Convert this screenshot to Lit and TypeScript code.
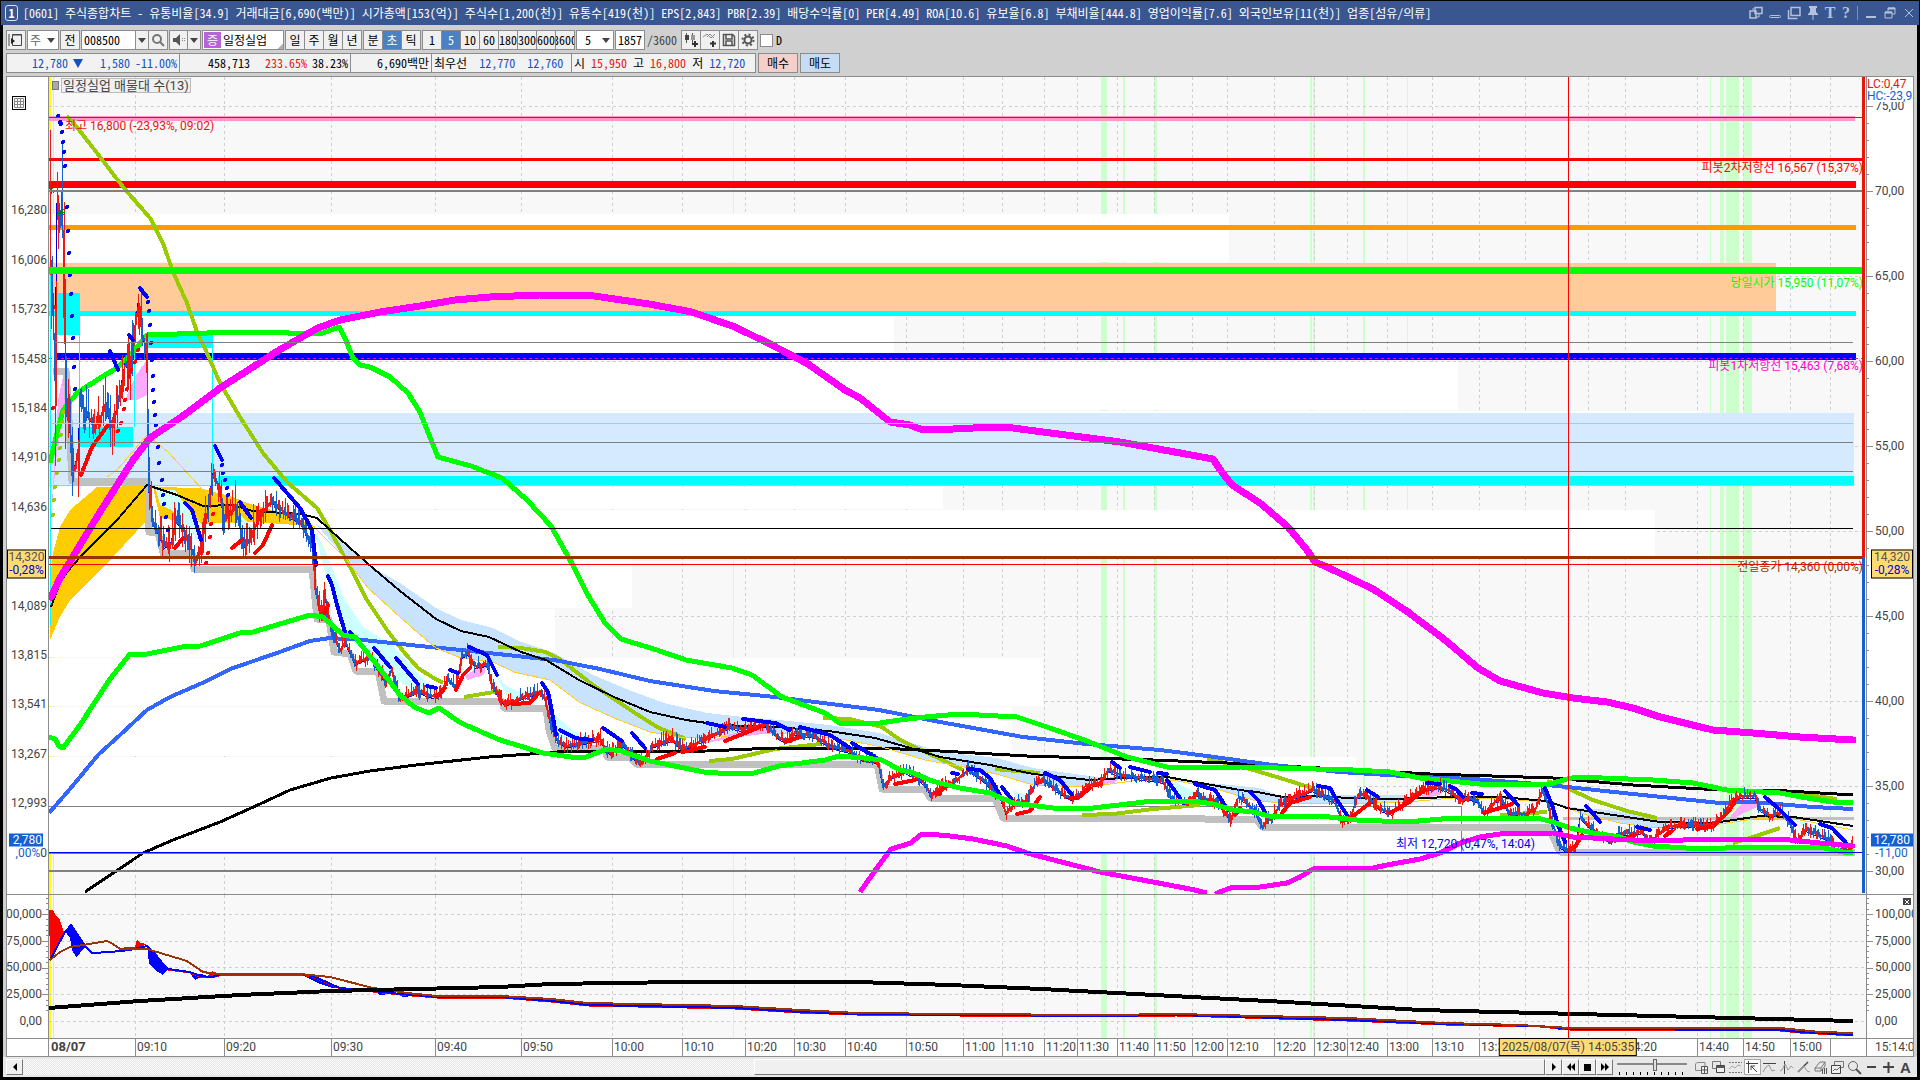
import { LitElement, html, svg, css } from "lit";
import { customElement, state } from "lit/decorators.js";

type Pt = [number, number];

/* ---------- plot space shared by both panes ---------- */
const X0 = 49, W = 1817;
const MAIN_Y = 77, MAIN_H = 817;
const SUB_Y = 895, SUB_H = 143;
const px = (x: number) => `${((x - X0) / W) * 100}%`;
const mainTop = (y: number) => `${((y - MAIN_Y) / MAIN_H) * 100}%`;
const subTop = (y: number) => `${((y - SUB_Y) / SUB_H) * 100}%`;

/* "x,y x,y ..." */
const pts = (s: string): Pt[] => s.trim().split(/\s+/).map(p => p.split(",").map(Number) as Pt);

const times: [number, string][] = [
  [135, "09:10"], [224, "09:20"], [331, "09:30"], [435, "09:40"], [521, "09:50"], [612, "10:00"], [682, "10:10"],
  [745, "10:20"], [794, "10:30"], [845, "10:40"], [906, "10:50"], [963, "11:00"], [1002, "11:10"], [1044, "11:20"],
  [1077, "11:30"], [1117, "11:40"], [1154, "11:50"], [1192, "12:00"], [1227, "12:10"], [1274, "12:20"],
  [1314, "12:30"], [1347, "12:40"], [1387, "13:00"], [1432, "13:10"], [1479, "13:30"], [1525, ""], [1588, ""],
  [1625, "14:20"], [1697, "14:40"], [1743, "14:50"], [1790, "15:00"], [1830, ""],
];
const percents = ["75,00", "70,00", "65,00", "60,00", "55,00", "50,00", "45,00", "40,00", "35,00", "30,00"];
const prices: [number, string][] = [
  [210, "16,280"], [260, "16,006"], [309, "15,732"], [359, "15,458"], [408, "15,184"], [457, "14,910"],
  [507, "14,636"], [606, "14,089"], [655, "13,815"], [704, "13,541"], [754, "13,267"], [803, "12,993"],
];
const volumes: [number, string][] = [[914, "100,000"], [941, "75,000"], [967, "50,000"], [994, "25,000"], [1021, "0,00"]];
const stripes: Pt[] = [[733, 1], [1101, 6], [1123, 2], [1154, 3], [1310, 2], [1313, 2], [1363, 2], [1407, 1], [1710, 1], [1720, 4], [1726, 13], [1743, 9]];
/* volume-by-price rows: top, height, right edge */
const profile: [number, number, number][] = [
  [214, 48, 1229], [312, 49, 894], [362, 48, 1458], [411, 2, 1702], [487, 22, 943], [510, 48, 1655],
  [559, 49, 632], [609, 48, 555], [658, 48, 1043], [707, 49, 1012], [757, 49, 1356], [807, 46, 1461],
];

const magentaUp = pts("51,597 60,578 77,550 100,512 133,460 150,438 187,413 220,388 253,367 276,352 300,338 318,328 340,320 380,312 420,306 455,300 490,297 539,295 594,296 649,304 692,312 735,327 770,344 808,364 845,390 860,398 890,422 910,425 920,429 953,429 993,427 1013,428 1043,432 1120,442 1213,459 1221,471 1232,485 1260,503 1288,527 1307,550 1315,562 1327,567 1373,589 1408,612 1445,640 1478,668 1500,681 1543,693 1573,698 1607,702 1633,708 1660,717 1713,730 1753,733 1800,737 1853,740");
const magentaLow = pts("860,892 879,865 891,849 911,843 920,835 928,834 950,836 973,839 1007,846 1027,853 1100,872 1190,889 1207,893");
const magentaLow2 = pts("1217,893 1233,887 1260,887 1287,883 1300,877 1313,869 1373,868 1387,865 1420,859 1440,853 1460,843 1480,837 1500,834 1553,833 1573,837 1653,841 1713,839 1780,839 1820,843 1853,846");
const greenUp = pts("50,463 57,433 63,410 77,393 100,378 117,368 133,352 147,335 207,333 213,332 287,332 290,334 323,333 339,327 345,338 353,358 360,365 370,367 390,377 408,393 420,412 438,457 471,466 502,478 527,500 551,526 570,560 589,597 605,623 621,639 657,650 686,660 732,668 752,675 782,697 825,713 841,724 880,723 900,720 925,717 960,714 1017,717 1047,727 1087,741 1127,757 1167,767 1240,767 1353,770 1390,772 1420,778 1480,784 1550,784 1567,779 1577,777 1653,780 1693,783 1727,790 1780,793 1807,798 1833,802 1853,802");
const greenLow = pts("49,737 55,739 59,746 63,748 80,725 110,679 130,654 147,654 187,646 200,646 240,633 253,632 310,615 323,617 343,635 355,637 373,660 387,678 400,695 414,707 429,713 439,708 461,723 500,740 543,753 571,757 586,757 607,749 621,751 650,761 704,772 732,774 754,773 779,766 825,760 839,756 864,758 882,760 900,770 911,772 932,781 960,788 990,793 1013,803 1053,808 1093,808 1153,801 1193,801 1213,804 1233,810 1253,812 1273,817 1320,816 1357,820 1407,822 1453,818 1537,818 1553,822 1570,828 1593,833 1620,837 1633,842 1653,846 1703,849 1747,847 1820,847 1843,852 1853,852");
const blueMa = pts("49,813 70,789 98,755 120,735 147,710 170,697 200,684 233,668 277,653 310,641 330,638 363,640 420,646 461,650 507,655 554,660 600,669 650,681 714,691 775,697 879,710 940,722 1023,737 1087,744 1160,750 1207,756 1273,765 1340,772 1420,777 1473,779 1537,784 1567,787 1633,794 1720,803 1753,802 1813,807 1853,809");
const blackLong = pts("85,892 143,853 173,840 220,822 260,804 290,790 331,778 370,771 416,765 489,757 557,752 707,751 775,748 900,749 940,751 1027,756 1153,760 1227,763 1430,774 1553,778 1633,785 1703,789 1787,791 1853,795");
const blackMid = pts("51,607 60,583 67,572 82,555 117,520 147,485 177,495 203,506 233,505 253,511 300,514 317,518 330,530 367,563 400,591 436,619 461,631 489,637 521,652 546,660 579,680 614,697 650,712 686,720 721,725 775,727 829,731 875,738 907,747 940,757 990,765 1033,774 1090,780 1140,777 1167,777 1240,790 1257,792 1283,797 1323,796 1347,798 1390,799 1453,797 1500,797 1547,801 1567,808 1607,814 1660,822 1710,823 1727,821 1760,816 1793,817 1820,821 1853,826");
const olives = [
  "67,116 72,121 97,153 123,187 150,218 163,243 173,272 187,303 197,332 207,353 220,383 240,417 263,453 287,482 317,508 330,530 350,567 367,600 387,630 403,651 418,668 432,677 443,683",
  "498,647 521,648 546,652 561,660 593,685 632,711 657,727 686,739",
  "823,718 850,719 882,727 900,740 936,757 963,770",
  "995,769 1017,771 1040,773", "1207,760 1217,761 1250,769 1280,778 1312,788",
  "1547,781 1567,788 1593,800 1627,811 1657,818", "464,697 500,691", "709,761 732,759 775,749 821,744",
  "1082,815 1113,814 1153,809 1200,805", "1500,815 1547,812", "1733,843 1753,837 1780,828", "1780,792 1815,796 1837,799",
].map(pts);
const trail = [
  "53,371 66,371 68,400 72,481 148,481 149,532 158,532 163,553 192,553 194,569 312,569 317,619 329,620 334,652 350,654 356,671 378,671 384,701 502,701 504,708 546,708 549,730 555,748 605,749 607,757 630,757 636,764 877,764 882,789 925,789 930,798 995,798 1003,818 1153,818 1257,820 1262,827 1548,827 1560,852 1855,852",
].map(pts);
const yellowThin = [
  "107,477 117,470 147,435 168,452 203,490 240,512 313,526 347,560 367,587 400,617 418,633 436,648 461,658 493,662 514,672 550,680 579,702 614,718 650,732 679,737 707,738 757,733 796,733 846,740 882,747 925,760 970,768 1000,775 1033,785 1087,787 1140,780 1173,780 1213,788 1253,800 1280,803 1340,803 1373,803 1407,802 1453,798 1500,799 1547,802 1567,808 1587,815 1620,823 1647,827 1700,827 1760,818 1800,820 1853,830",
].map(pts);
const gold = [
  "50,582 53,553 60,527 70,510 97,487 147,486 147,520 113,557 70,600 60,617 50,640",
  "153,487 200,488 233,497 247,503 283,513 316,527 283,524 253,522 200,524 160,518",
].map(pts);
const cloud = [
  "316,524 327,530 377,570 400,583 436,608 461,620 493,628 521,642 554,653 593,675 629,690 664,703 707,713 743,717 779,720 829,725 879,733 918,745 940,752 997,758 1033,768 1067,773 1113,779 1087,787 1033,785 1000,775 970,768 925,760 882,747 846,740 796,733 757,733 707,738 679,737 650,732 614,718 579,702 550,680 514,672 493,662 461,658 436,648 418,633 400,617 367,587 347,560",
  "1167,777 1200,782 1260,788 1280,796 1340,795 1407,795 1407,802 1340,803 1280,803 1253,800 1213,788 1173,780",
  "1547,800 1570,807 1607,810 1647,816 1680,820 1717,822 1693,827 1647,827 1620,823 1587,815 1567,808",
].map(pts);
const paleCyan = [
  "156,490 175,490 190,512 207,530 201,546 190,530 172,510 160,505",
  "313,527 325,550 345,600 363,627 392,645 420,676 440,692 425,696 396,680 368,655 345,634 330,590",
  "492,668 505,685 520,692 538,690 525,700 508,698", "547,700 556,716 575,732 600,738 590,743 565,744 553,728",
  "610,740 640,757 625,753", "1167,778 1195,792 1218,798 1228,810 1205,800 1178,797", "240,515 255,530 247,540",
  "1795,820 1815,825 1840,845 1835,850 1815,835", "1012,790 1030,797 1018,802",
].map(pts);
const pinkFill = [
  "125,400 136,375 147,360 147,395 137,400", "58,400 64,372 67,395 56,460 51,520",
  "465,676 477,668 487,664 484,675 467,680", "700,744 735,733 775,726 778,732 740,737",
  "1090,785 1125,772 1115,783", "1425,792 1447,786 1440,795 1420,799", "1725,823 1742,803 1762,805 1740,815",
].map(pts);
const knots = pts("50,130 51,260 53,300 55,370 57,200 60,210 63,230 66,390 70,430 73,470 78,450 80,400 88,415 95,425 105,405 112,425 118,400 125,360 130,372 136,315 138,300 143,335 147,350 149,490 153,520 160,535 164,545 170,543 176,520 185,530 195,558 200,545 207,510 213,470 220,490 224,520 235,505 245,545 255,525 262,510 272,500 280,508 290,515 300,520 312,545 316,590 320,612 325,595 332,630 340,648 345,640 355,662 370,655 385,680 392,668 400,697 418,690 432,695 440,693 447,677 455,685 462,655 468,652 475,665 487,663 492,683 502,700 506,703 520,697 535,692 541,690 546,700 551,725 558,740 567,745 578,742 600,738 604,745 610,752 622,742 632,755 640,762 648,752 652,745 660,742 672,738 682,748 700,740 717,732 730,725 740,728 765,723 777,735 785,740 795,732 815,735 830,745 850,750 862,758 878,760 883,785 892,775 905,770 915,775 925,783 931,793 945,784 955,780 968,768 985,780 995,792 1000,795 1006,812 1013,803 1025,800 1035,782 1043,777 1055,788 1070,797 1078,795 1085,785 1100,782 1108,768 1118,773 1130,775 1150,778 1163,780 1172,798 1187,802 1195,792 1205,798 1218,802 1230,818 1238,795 1245,800 1256,812 1262,825 1272,815 1280,803 1290,797 1305,792 1312,788 1325,795 1335,800 1342,820 1350,815 1357,795 1365,793 1380,808 1392,812 1405,800 1420,790 1437,785 1450,790 1460,798 1470,797 1478,800 1484,812 1495,800 1500,797 1510,812 1525,813 1535,807 1542,788 1547,800 1552,820 1560,845 1568,850 1575,845 1580,815 1586,822 1597,832 1610,840 1618,832 1635,832 1642,830 1650,842 1658,832 1670,825 1680,824 1710,825 1722,815 1730,800 1740,795 1755,795 1760,808 1770,815 1782,810 1790,822 1797,840 1805,828 1815,832 1828,838 1835,848 1845,851 1853,843");
const sarBlue = [
  "129,335 133,340", "110,351 118,370", "140,288 147,297", "215,446 222,460", "185,503 192,510 201,540", "240,502 251,518",
  "274,478 300,508 312,530 316,565", "328,576 332,585 337,605 345,632", "350,632 358,640", "374,648 390,667", "396,658 418,684", "427,686 436,688",
  "450,670 458,673", "469,647 487,655 497,675", "542,683 548,692 552,712 556,735", "560,730 575,738 592,740", "603,728 622,741",
  "632,733 645,748", "707,723 725,727", "743,719 775,723 790,730", "800,727 830,735 850,748", "852,743 880,760", "952,773 958,774",
  "968,769 980,770 990,778 1000,795", "1002,787 1012,800", "1045,773 1060,780 1072,795", "1112,762 1120,768", "1130,767 1150,772",
  "1158,773 1167,774", "1167,780 1180,798", "1195,784 1215,790 1228,810", "1250,792 1258,800 1265,812", "1318,786 1330,788 1335,797 1347,815",
  "1367,790 1378,797", "1427,783 1440,784", "1450,786 1457,790 1463,797", "1472,793 1482,794", "1505,791 1518,805", "1545,788 1552,805 1558,825 1565,842",
  "1586,806 1590,810 1600,822", "1637,827 1650,830", "1765,797 1778,808 1795,825", "1820,824 1832,828 1848,845",
].map(pts);
const sarRed = [
  "81,475 92,447 108,425", "175,548 183,538", "232,548 242,540", "255,553 263,545 272,525", "323,617 328,605", "437,697 445,688",
  "456,690 463,675 470,668", "512,704 530,703 538,694", "657,759 675,753", "682,752 705,747", "725,741 745,733 760,727", "785,742 800,737",
  "895,784 915,780", "938,794 945,787", "1017,814 1030,811 1040,797", "1070,798 1078,798 1090,788", "1235,815 1240,808",
  "1282,813 1290,803 1310,797", "1353,816 1370,803", "1390,813 1403,806 1425,790", "1484,813 1500,808 1512,804", "1575,847 1582,835",
  "1620,840 1635,835", "1665,836 1672,831", "1697,829 1710,827", "1715,825 1730,810 1735,800", "940,794 936,793",
].map(pts);
const dotsBlue = pts("58,116 60,122 61,124 62,132 63,142 64,152 65,166 67,207 68,231 69,253 70,275 71,294 72,316 73,338 74,367 75,389 148,302 149,311 150,325 151,343 152,360 153,376 153,390 154,402 155,415 156,425 158,447 159,463 162,480 163,495 164,504 166,517 168,530 222,465 223,473 225,480 227,488 228,495");
const dotsRed = pts("118,431 121,423 124,409 125,400 127,389 129,376 131,370 135,362 138,350 206,563 208,553 210,537 211,524 213,514 53,408 55,307");
const dotsOlive = pts("53,515 54,500 55,487 57,473 59,460 60,448 61,435 62,422 63,412");

/* one-pixel bars around the price path, split by direction */
function buildBars() {
  let seed = 11;
  const rnd = () => ((seed = (seed * 16807) % 2147483647) / 2147483647);
  let up = "", down = "", line = "";
  for (let k = 1; k < knots.length; k++) {
    const [xa, ya] = knots[k - 1], [xb, yb] = knots[k];
    for (let x = xa; x < xb; x++) {
      const y = ya + ((yb - ya) * (x - xa)) / (xb - xa);
      const amp = x < 66 ? 90 : x < 150 ? 34 : x < 260 ? 26 : x < 330 ? 18 : x < 700 ? 10 : 8;
      const slope = Math.abs(yb - ya) / (xb - xa);
      const top = Math.round(y - rnd() ** 2 * amp), bottom = Math.round(y + 2 + rnd() ** 2 * amp * 0.7 + slope);
      const seg = `M${x + 0.5} ${Math.max(118, top)}V${Math.min(bottom, 853)}`;
      if (rnd() < (yb < ya ? 0.85 : 0.4)) up += seg; else down += seg;
      line += `${line ? "L" : "M"}${x} ${Math.round(y + 3)}`;
    }
  }
  return { up, down, line };
}
const bars = buildBars();

const subBlack = pts("49,1008 140,1001 240,995 331,991 500,987 551,984 680,982 857,982 950,985 1041,989 1286,1002 1420,1010 1853,1021");
const subBrown = pts("50,960 60,952 70,947 83,945 107,941 113,944 120,949 147,949 187,961 203,972 217,974 300,974 330,977 373,988 407,993 437,996 500,996 551,999 588,1003 735,1006 800,1010 857,1013 960,1014 1102,1015 1176,1014 1347,1018 1445,1023 1520,1025 1570,1028 1780,1028 1820,1032 1853,1033");
const subBlue = pts("50,960 65,932 71,925 85,946 92,953 110,952 130,950 147,946 168,969 190,972 200,976 212,977 222,974 300,974 312,976 340,988 373,991 400,994 437,997 500,997 551,1001 588,1005 735,1008 800,1012 857,1014 960,1015 1102,1016 1176,1015 1347,1020 1445,1024 1540,1026 1570,1029 1780,1030 1800,1032 1853,1035");
const subRedFill = [
  "49,910 53,910 55,914 60,920 64,932 57,945 50,960", "118,950 125,947 135,947 137,939 140,943 147,944 140,948",
  "208,976 212,971 220,974 214,977",
].map(pts);
const subBlueFill = [
  "65,931 71,924 78,935 86,946 80,953 76,957 72,950 70,938", "147,946 155,952 168,969 163,975 155,970 149,963",
  "190,973 203,974 199,978 195,980", "300,974 318,977 340,987 333,988 320,984", "375,991 390,994 380,995", "400,994 410,997 402,997", "1545,1027 1570,1028 1560,1030",
].map(pts);

const line = (p: Pt[], color: string, w: number, round = false) =>
  svg`<polyline points=${p.join(" ")} fill="none" stroke=${color} stroke-width=${w} stroke-linejoin="round" stroke-linecap=${round ? "round" : "butt"} />`;
const area = (p: Pt[], color: string) => svg`<polygon points=${p.join(" ")} fill=${color} />`;
const box = (x: number, y: number, r: number, h: number, color: string) =>
  svg`<rect x=${x} y=${y} width=${r - x} height=${h} fill=${color} />`;
const dot = (p: Pt, color: string) => svg`<circle cx=${p[0]} cy=${p[1]} r="2" fill=${color} />`;
const star = (x: number, y: number) =>
  svg`<path d="M${x - 4} ${y}h8M${x} ${y - 4}v8M${x - 3} ${y - 3}l6 6M${x + 3} ${y - 3}l-6 6" stroke="#008000" fill="none" />`;

const arrow = html`<svg class="tri" viewBox="0 0 8 5" width="8" height="5" aria-hidden="true"><path d="M0 0h8L4 5z" fill="#444" /></svg>`;
const icon = (w: number, h: number, body: unknown) =>
  html`<svg viewBox="0 0 ${w} ${h}" width=${w} height=${h} fill="none" aria-hidden="true">${body}</svg>`;

const winIcons: [string, unknown][] = [
  ["화면 분리", icon(14, 14, svg`<path d="M1 5h6v7H1zM6 1.500h7v6H6z" stroke="#b4c1dc" stroke-width="1.500" fill="#3a5690" /><path d="M4 4v-2M10 8v3h-3" stroke="#b4c1dc" />`)],
  ["접기", icon(14, 14, svg`<rect x="1.500" y="9.500" width="11" height="2" rx="1" stroke="#b4c1dc" />`)],
  ["복사", icon(14, 14, svg`<path d="M4 1.500h9v8H4z" stroke="#b4c1dc" stroke-width="1.500" /><path d="M1.500 4v8.500h9" stroke="#b4c1dc" stroke-width="1.500" />`)],
  ["고정", icon(12, 14, svg`<path d="M2 0h8v2H9v4l2 2v1H1V8l2-2V2H2z" fill="#b4c1dc" /><path d="M6 9v5" stroke="#b4c1dc" />`)],
];
const footIcons: [string, unknown][] = [
  ["차트 추가", svg`<path d="M3 2.500h8v8H1.500V4z" stroke="#888" /><path d="M7.500 6.500h6v7h-6zM10.500 6.500v7M7.500 10h6" stroke="#555" fill="#f0f0f0" />`],
  ["차트 복사", svg`<path d="M1.500 1.500h8v7h-8z" stroke="#777" /><path d="M5.500 5.500h8v7h-8z" stroke="#444" fill="#f0f0f0" /><path d="M5 6h9v2H5z" fill="#555" />`],
  ["차트 이동", svg`<path d="M1 2.500h13M1 12.500h13" stroke="#777" stroke-dasharray="2 1" /><path d="M1 9l3-3 3 2 3-3 3 1" stroke="#aaa" />`],
  ["십자선", svg`<path d="M1 3.500h12M3.500 1v12" stroke="#444" /><path d="M6 6l6 6M6 10V6h4" stroke="#444" />`],
  ["수평선", svg`<path d="M1 3.500h13" stroke="#444" /><path d="M1 12l3-5 3-2 3 6 3-1" stroke="#999" />`],
  ["수직선", svg`<path d="M5.500 1v13" stroke="#444" /><path d="M1 11l2-1 3-6 3 6 3-4 2 2" stroke="#999" />`],
  ["추세선", svg`<path d="M2 12L12 2" stroke="#444" stroke-width="1.500" /><path d="M2 12l3-3 3-3 3 5 3 1" stroke="#999" />`],
  ["지우개", svg`<path d="M2 8l5-6h5l-4 6zM2 8v3h6V8M8 11l4-5V2" stroke="#777" /><path d="M9.500 9v5M11.500 8v6M13.500 8v6" stroke="#555" />`],
  ["차트 겹치기", svg`<path d="M4.500 1.500h9v6h-9z" stroke="#777" /><path d="M1.500 5.500h9v8h-9z" stroke="#444" fill="#f0f0f0" /><path d="M3 11l2-2 2 1 3-3" stroke="#666" />`],
  ["확대경", svg`<circle cx="6" cy="6" r="4.500" stroke="#666" /><path d="M9 9l5 5" stroke="#555" stroke-width="2" />`],
  ["축소", svg`<path d="M3 7h9" stroke="#444" stroke-width="2" />`],
  ["확대", svg`<path d="M2 7h11M7.500 2v11" stroke="#444" stroke-width="2" />`],
];

@customElement("app-root")
export class AppRoot extends LitElement {
  @state() private period = "초";
  @state() private tick = "5";

  static styles = css`
    :host { display: flex; flex-direction: column; height: 100vh; box-sizing: border-box; padding: 1px 0 3px; background: #000; overflow: hidden;
      font-family: "Noto Sans Mono CJK KR", Roboto, "Noto Sans CJK KR", sans-serif; font-size: 12px; line-height: 14px; color: #000; }
    * { box-sizing: border-box; }
    button, input, select { font: inherit; color: inherit; margin: 0; padding: 0; border-radius: 0; }
    button { display: flex; align-items: center; justify-content: center; white-space: nowrap; overflow: hidden; }
    svg { display: block; flex: none; }

    .title { flex: none; display: flex; align-items: center; height: 24px; margin: 0 1px; padding: 0 4px; background: #3a5690; color: #fff; gap: 5px; }
    .title h1 { margin: 0; font: inherit; flex: 1; white-space: pre; overflow: hidden; }
    .num { width: 13px; height: 16px; border: 1px solid #dce4f4; border-radius: 3px; font-weight: bold; text-align: center; line-height: 14px; }
    .win { display: flex; align-items: center; gap: 6px; }
    .win button { background: none; border: 0; color: #b4c1dc; height: 20px; width: 13px; overflow: visible; }
    .win .serif { width: 10px; font: bold 16px "Liberation Serif", serif; }
    .win .split { width: 1px; height: 14px; background: #8090b4; }

    .body { flex: 1; min-height: 0; margin: 0 3px; padding: 5px 3px 0; background: #d0d0d0; display: flex; flex-direction: column; }
    .bar { flex: none; display: flex; align-items: stretch; height: 20px; margin-bottom: 3px; gap: 1px; }
    .bar button, .cell { background: #f0f0f0; border: 1px solid #8c8c8c; }
    .tool { width: 20px; }
    .group { display: flex; }
    .group button { width: 20px; margin-right: -1px; overflow: hidden; border-color: #8c8c8c; }
    .group button:last-child { margin-right: 0; }
    .group button[aria-pressed="true"] { background: #4a80c4; color: #fff; }
    .combo { display: grid; grid-template-columns: 1fr 14px; border: 1px solid #8c8c8c; background: #fff; }
    .combo select, .combo input { appearance: none; grid-area: 1 / 1 / 2 / 3; border: 0; background: none; padding: 0 2px; width: 100%; min-width: 0; outline: 0; }
    .combo .tri { grid-area: 1 / 2; align-self: center; justify-self: center; pointer-events: none; }
    .w32 { width: 32px; } .w38 { width: 38px; }
    .combo.w32 { color: #666; }
    .combo.w38 select { padding-left: 8px; }
    .combo.code { grid-template-columns: 1fr; width: 55px; border-right: 0; }
    .bar .drop { width: 14px; margin-left: -1px; }
    .stock { display: flex; align-items: center; gap: 2px; width: 82px; border: 1px solid #8c8c8c; background: linear-gradient(135deg, transparent 94%, #b0b0b0 94%), #fff; }
    .stock b { width: 17px; height: 16px; background: #b565d8; color: #fff; font-weight: normal; text-align: center; line-height: 15px; margin-left: 1px; }
    .count { width: 30px; border: 1px solid #8c8c8c; background: #fff; }
    .bar .count { padding: 0 2px; }
    .total { align-self: center; width: 34px; padding-left: 1px; color: #444; }
    .check { display: flex; align-items: center; gap: 3px; margin-left: 1px; }
    .check input { appearance: none; width: 13px; height: 13px; border: 1px solid #8c8c8c; background: #fff; }

    .quote { gap: 0; }
    .cell { display: flex; align-items: center; justify-content: flex-end; border-left-width: 0; padding: 0 2px; gap: 5px; background: #f2f2f2; white-space: nowrap; }
    .cell:first-child { border-left-width: 1px; }
    .c1 { width: 174px; } .c2 { width: 171px; } .c3 { width: 81px; } .c4 { width: 140px; justify-content: flex-start; } .c5 { width: 184px; justify-content: flex-start; }
    .c4 { gap: 12px; } .c5 { gap: 6px; }
    .push { margin-left: 12px; } .push.red { margin-left: 10px; }
    .blue { color: #1450c8; } .red { color: #e61414; }
    .quote button { width: 40px; margin-left: 2px; }
    .quote .buy { background: #f5d0cb; } .quote .sell { background: #c5dcf4; }

    .chart { flex: 1; min-height: 0; display: grid; grid-template-columns: 42px minmax(0, 1fr) 47px; grid-template-rows: minmax(0, 818fr) minmax(0, 144fr) 17px; border: 1px solid #8c8c8c; background: #fff; color: #444;
      font-family: Roboto, "Noto Sans CJK KR", sans-serif; }
    .axis, .plot { position: relative; overflow: hidden; border-bottom: 1px solid #8c8c8c; }
    .left { border-right: 1px solid #8c8c8c; }
    .right { border-left: 1px solid #8c8c8c; }
    .plot svg { width: 100%; height: 100%; }
    .lab { position: absolute; transform: translateY(-50%); white-space: nowrap; }
    .left .lab { right: 1px; }
    .left .vol { right: 6px; }
    .right .lab { left: 8px; }
    .right .lab.note { left: 0; background: #fff; line-height: 12px; }
    .tk { position: absolute; height: 1px; background: #8c8c8c; width: 2px; }
    .tk.big { width: 6px; }
    .left .tk { right: 0; } .right .tk { left: 0; }
    .mark { position: absolute; transform: translateY(-50%); border: 1px solid #000; background: #ffdc73; line-height: 13px; color: #555; text-align: center; height: 29px; }
    .mark i { font-style: normal; color: #0000e0; display: block; }
    .left .mark { right: 2px; width: 39px; } .right .mark { left: 4px; width: 42px; }
    .now { background: #1560d0; color: #fff; line-height: 13px; padding: 0 1px; }
    .right .lab.now { left: 4px; padding-left: 3px; width: 42px; overflow: hidden; }
    .left .lab.now { right: 5px; padding-left: 4px; }
    .t-blue { color: #1560d0; }
    .glyph { position: absolute; top: 19px; left: 5px; width: 14px; height: 14px; padding: 0; border: 1px solid #000; background: #f8f8f8; }
    .shut { position: absolute; top: 3px; right: 2px; width: 8px; height: 7px; border: 0; background: #444; color: #fff; font-size: 8px; }
    .legend { position: absolute; top: 1px; left: 3px; display: flex; align-items: center; gap: 2px; }
    .legend::before { content: ""; width: 5px; height: 7px; background: #aaa; border: 1px solid #777; }
    .legend span { background: #f0f0f0; border: 1px solid #bbb; padding: 0 1px; font-size: 13px; line-height: 13px; height: 15px; }
    .end { right: 3px; }
    .time { position: relative; border-left: 1px solid #8c8c8c; margin-left: -1px; }
    .time span { position: absolute; top: 0; height: 17px; line-height: 16px; padding-left: 1px; border-left: 1px solid #8c8c8c; }
    .time .day { border: 0; font-weight: bold; padding-left: 2px; font-size: 13px; }
    .time .cross { top: -1px; z-index: 1; transform: translateX(-50%); padding: 0 2px; height: 18px; border: 1px solid #000; background: #ffdc73; }
    .last { border-left: 1px solid #8c8c8c; padding-left: 8px; overflow: hidden; line-height: 16px; white-space: nowrap; }

    .foot { flex: none; display: flex; align-items: center; height: 20px; margin: 0 -3px; padding: 0 3px; background: #e8e8e8; }
    .foot button { width: 17px; height: 16px; background: #f0f0f0; border: 1px solid #fff; border-right-color: #777; border-bottom-color: #777; }
    .track { flex: 1; height: 16px; display: flex; justify-content: flex-end; background: repeating-conic-gradient(#e4e4e4 0 25%, #fff 0 50%) 0 0 / 2px 2px; }
    .thumb { width: 52%; background: #f0f0f0; border: 1px solid #fff; border-right-color: #777; border-bottom-color: #777; }
    .zoom { appearance: none; width: 70px; height: 16px; margin: 0 6px 0 4px; background: linear-gradient(#888, #888) 0 4px / 100% 2px no-repeat, repeating-linear-gradient(90deg, #000 0 1px, transparent 1px 7px) 2px 13px / 100% 3px no-repeat; }
    .zoom::-webkit-slider-thumb { appearance: none; width: 4px; height: 12px; margin-top: -4px; background: #e0e0e0; border: 1px solid #666; }
    .foot .ico { background: none; border: 0; }
    .foot .ico.on { background: #fff; border: 1px solid #aaa; }
    .foot .letter { font: bold 15px "Liberation Sans", sans-serif; color: #444; }
  `;

  private backdrop(y: number, h: number) {
    return svg`
      <rect x=${X0} y=${y} width=${W} height=${h} fill="#f8f8f8" />
      ${stripes.map(([x, w]) => svg`<rect x=${x} y=${y} width=${w} height=${h} fill="#ccffcc" />`)}
      ${times.map(([x]) => svg`<path d="M${x + 0.5} ${y}V${y + h}" stroke="#d0d0d0" stroke-dasharray="3 3" />`)}
      <rect x="49" y=${y} width="2" height=${h} fill="#ffff00" /><rect x="53" y=${y} width="1" height=${h} fill="#ffff00" />`;
  }

  private mainPlot() {
    return html`<svg viewBox="49 77 1817 817" preserveAspectRatio="none" shape-rendering="crispEdges" role="img" aria-label="주가 차트">
      ${this.backdrop(MAIN_Y, MAIN_H)}
      ${percents.map((_, i) => svg`<path d="M49 ${106.5 + i * 85}H1862" stroke="#d0d0d0" stroke-dasharray="3 3" />`)}
      ${profile.map(([y, h, r]) => box(49, y, r, h, "#fff"))}
      <path d="M1400 806.500H1461.500V853" fill="none" stroke="#808080" />
      ${box(49, 806, 1400, 1, "#808080")}
      ${box(49, 263, 1776, 48, "#ffcc99")}
      ${box(51, 413, 1854, 72, "#d6eaff")}
      ${area(gold[0], "#ffcc00")}${area(gold[1], "#ffcc00")}
      ${cloud.map(p => area(p, "#c8e3ff"))}
      ${paleCyan.map(p => area(p, "#ccffff"))}
      ${pinkFill.map(p => area(p, "#ffaaff"))}
      ${box(49, 116, 1855, 5, "#ff99cc")}${box(49, 158, 1862, 3, "#ff0000")}${box(49, 181, 1856, 7, "#ff0000")}
      ${box(49, 225, 1856, 5, "#ff9900")}${box(49, 311, 1856, 5, "#00ffff")}
      ${box(55, 353, 1856, 7, "#0000ff")}<path d="M49 358.500H1862" stroke="#ff00cc" stroke-dasharray="3 3" />
      ${box(218, 476, 1854, 9, "#00ffff")}${box(51, 485, 1854, 1, "#a8c8dc")}
      ${box(55, 293, 80, 42, "#00ffff")}${box(80, 427, 133, 20, "#00ffff")}${box(147, 333, 213, 15, "#00ffff")}
      <path d="M79.500 335V427M134.500 342V427M212.500 333V476M50.500 250V625" stroke="#00ffff" fill="none" />
      ${trail.map(p => line(p, "#c0c0c0", 7))}
      <path d="M1563 818.500H1854" stroke="#c0c0c0" stroke-width="3" />
      ${olives.map(p => line(p, "#99cc00", 4))}
      ${line(blackLong, "#000", 3)}
      ${line(blueMa, "#3366ff", 4)}
      ${line(greenUp, "#00ff00", 5)}
      ${yellowThin.map(p => line(p, "#ffcc33", 1))}
      ${line(blackMid, "#000", 2)}
      <path d=${bars.line} stroke="#0000dd" fill="none" />
      <path d=${bars.down} stroke="#1560d0" /><path d=${bars.up} stroke="#f01810" />
      ${sarBlue.map(p => line(p, "#0000ff", 4, true))}
      ${sarRed.map(p => line(p, "#ff0000", 4, true))}
      ${dotsBlue.map(p => dot(p, "#0000ff"))}${dotsRed.map(p => dot(p, "#ff0000"))}${dotsOlive.map(p => dot(p, "#99cc00"))}
      ${line(greenLow, "#00ff00", 5)}
      ${line(magentaUp, "#ff00ff", 7, true)}
      ${line(magentaLow, "#ff00ff", 5)}${line(magentaLow2, "#ff00ff", 5, true)}
      ${star(51, 190)}${star(61, 212)}
      ${box(49, 117, 1862, 1, "#ff0000")}${box(49, 190, 1862, 2, "#808080")}${box(49, 267, 1862, 7, "#00ff00")}
      ${box(55, 342, 1853, 1, "#808080")}${box(51, 423, 1853, 1, "#99ccff")}${box(51, 442, 1853, 1, "#808080")}
      ${box(51, 471, 1853, 1, "#808080")}${box(51, 528, 1853, 1, "#000")}${box(49, 556, 1862, 3, "#993300")}
      ${box(49, 564, 1862, 1, "#ff0000")}${box(49, 852, 1862, 1, "#0000ff")}${box(49, 853, 1560, 1, "#808080")}
      ${box(49, 870, 1862, 2, "#808080")}
      ${box(1568, 77, 1569, 817, "#ff0000")}
      ${box(1862, 77, 1865, 480, "#e81808")}${box(1862, 557, 1865, 336, "#1560d0")}
    </svg>`;
  }

  private subPlot() {
    return html`<svg viewBox="49 895 1817 143" preserveAspectRatio="none" shape-rendering="crispEdges" role="img" aria-label="거래 지표">
      ${this.backdrop(SUB_Y, SUB_H)}
      ${volumes.map(([y]) => svg`<path d="M49 ${y + 0.5}H1866" stroke="#d0d0d0" stroke-dasharray="3 3" />`)}
      ${subRedFill.map(p => area(p, "#ff0000"))}${subBlueFill.map(p => area(p, "#0000ff"))}
      ${line(subBlue.map(([x, y]) => [x, y + 1] as Pt).slice(8), "#ff0000", 1)}
      ${line(subBlue, "#0000ff", 2)}${line(subBrown, "#993300", 2)}${line(subBlack, "#000", 4)}
      ${box(1568, 895, 1569, 143, "#ff0000")}
    </svg>`;
  }

  private ticks(values: number[], major: number, top: (y: number) => string) {
    return values.map((y, i) => html`<span class="tk ${i % 5 === major ? "big" : ""}" style="top:${top(y)}"></span>`);
  }

  private group(items: string[], current: string, pick: (v: string) => void) {
    return html`<div class="group">${items.map(t =>
      html`<button aria-pressed=${t === current ? "true" : "false"} @click=${() => pick(t)}>${t}</button>`)}</div>`;
  }

  render() {
    const mainTicks = Array.from({ length: 46 }, (_, i) => 106 + i * 17);
    const subTicks = Array.from({ length: 22 }, (_, i) => Math.round(914 + (i - 3) * 5.35));
    const setPeriod = (v: string) => (this.period = v);
    return html`
      <header class="title">
        <span class="num">1</span>
        <h1>[0601] 주식종합차트 - 유통비율[34.9] 거래대금[6,690(백만)] 시가총액[153(억)] 주식수[1,200(천)] 유통수[419(천)] EPS[2,843] PBR[2.39] 배당수익률[0] PER[4.49] ROA[10.6] 유보율[6.8] 부채비율[444.8] 영업이익률[7.6] 외국인보유[11(천)] 업종[섬유/의류]</h1>
        <div class="win">
          ${winIcons.map(([n, g]) => html`<button aria-label=${n}>${g}</button>`)}
          <button class="serif">T</button><button class="serif">?</button>
          <span class="split"></span>
          <button aria-label="최소화">${icon(12, 14, svg`<path d="M1 11h10" stroke="#b4c1dc" stroke-width="2" />`)}</button>
          <button aria-label="복원">${icon(12, 14, svg`<path d="M1 6h7v6H1zM4 5V2h7v6H8" stroke="#b4c1dc" /><path d="M1 6.500h7M4 2.500h7" stroke="#b4c1dc" stroke-width="2" />`)}</button>
          <button aria-label="닫기">${icon(10, 14, svg`<path d="M1 3l8 8M9 3l-8 8" stroke="#b4c1dc" />`)}</button>
        </div>
      </header>
      <div class="body">
        <div class="bar">
          <button class="tool" aria-label="패널">${icon(16, 14, svg`<path d="M4.500 1.500h9v11h-9z" stroke="#444" /><path d="M1 1v12M4.500 2h9" stroke="#444" /><path d="M3 5l4 3-4 3z" fill="#222" />`)}</button>
          <div class="combo w32"><select aria-label="구분"><option>주</option></select>${arrow}</div>
          <button class="tool">전</button>
          <div class="group">
            <div class="combo code"><input aria-label="종목코드" value="008500" /></div>
            <button class="drop" aria-label="종목 목록">${arrow}</button>
            <button aria-label="검색">${icon(14, 14, svg`<circle cx="6" cy="6" r="4" stroke="#777" stroke-width="2" /><path d="M9 9l4 4" stroke="#777" stroke-width="2" />`)}</button>
          </div>
          <div class="group">
            <button aria-label="소리">${icon(14, 14, svg`<path d="M1 5h3l4-4v12L4 9H1z" fill="#555" /><path d="M10.500 5v4M12.500 5v4" stroke="#888" stroke-dasharray="1 1" />`)}</button>
            <button class="drop" aria-label="소리 설정">${arrow}</button>
          </div>
          <div class="stock"><b>증</b><span>일정실업</span></div>
          ${this.group(["일", "주", "월", "년"], this.period, setPeriod)}
          ${this.group(["분", "초", "틱"], this.period, setPeriod)}
          ${this.group(["1", "5", "10", "60", "180", "300", "600", "3600"], this.tick, v => (this.tick = v))}
          <div class="combo w38"><select aria-label="주기"><option>5</option></select>${arrow}</div>
          <input class="count" aria-label="봉 개수" value="1857" />
          <span class="total">/3600</span>
          <div class="group">
            <button aria-label="봉 유형">${icon(16, 16, svg`<path d="M3.500 1v10M9.500 1v10" stroke="#555" /><path d="M2 3h4v5H2z" fill="#444" /><path d="M8 3h4v5H8z" fill="#999" /><path d="M9 12h6M12 9v6" stroke="#333" stroke-width="2" />`)}</button>
            <button aria-label="지표">${icon(16, 16, svg`<path d="M1 5l4-3 4 4 4-4M5 5l3-3 4 4" stroke="#888" /><path d="M8 11.500h6M11 9v6" stroke="#333" stroke-width="2" />`)}</button>
            <button aria-label="저장">${icon(14, 14, svg`<path d="M1.500 1.500h9l2 2v9h-11zM4 2v4h6V2M4 12V8h6v4" stroke="#555" stroke-width="1.500" />`)}</button>
            <button aria-label="설정">${icon(14, 14, svg`<circle cx="7" cy="7" r="3.500" stroke="#555" stroke-width="2" /><circle cx="7" cy="7" r="5.500" stroke="#555" stroke-width="2" stroke-dasharray="2 2.300" />`)}</button>
          </div>
          <label class="check"><input type="checkbox" />D</label>
        </div>
        <div class="bar quote">
          <div class="cell c1 blue"><span>12,780</span><svg viewBox="0 0 10 9" width="10" height="9" aria-hidden="true"><path d="M0 0h10L5 9z" fill="#1450c8" /></svg><span class="push">1,580</span><span>-11.00%</span></div>
          <div class="cell c2"><span>458,713</span><span class="push red">233.65%</span><span>38.23%</span></div>
          <div class="cell c3">6,690백만</div>
          <div class="cell c4"><span>최우선</span><span class="blue">12,770</span><span class="blue">12,760</span></div>
          <div class="cell c5"><span>시</span><span class="red">15,950</span><span>고</span><span class="red">16,800</span><span>저</span><span class="blue">12,720</span></div>
          <button class="buy">매수</button><button class="sell">매도</button>
        </div>
        <div class="chart">
          <div class="axis left">
            <button class="glyph" aria-label="데이터 표">${icon(10, 10, svg`<path d="M.500 .500h9v9h-9zM3.500 0v10M6.500 0v10M0 3.500h10M0 6.500h10" stroke="#888" />`)}</button>
            ${prices.map(([y, t]) => html`<span class="lab" style="top:${mainTop(y)}">${t}</span>`)}
            <span class="mark" style="top:${mainTop(564)}">14,320<i>-0,28%</i></span>
            <span class="lab now" style="top:${mainTop(840)}">2,780</span>
            <span class="lab" style="top:${mainTop(853)}"><span class="t-blue">,00%</span>0</span>
          </div>
          <div class="plot">
            ${this.mainPlot()}
            <div class="legend"><span>일정실업 매물대 수(13)</span></div>
            <span class="lab red" style="left:${px(65)};top:${mainTop(126)}">최고 16,800 (-23,93%, 09:02)</span>
            <span class="lab end" style="top:${mainTop(168)};color:#f00">피봇2차저항선 16,567 (15,37%)</span>
            <span class="lab end" style="top:${mainTop(283)};color:#0f0">당일시가 15,950 (11,07%)</span>
            <span class="lab end" style="top:${mainTop(366)};color:#f0c">피봇1차저항선 15,463 (7,68%)</span>
            <span class="lab end" style="top:${mainTop(567)};color:#930">전일종가 14,360 (0,00%)</span>
            <span class="lab" style="left:${px(1396)};top:${mainTop(844)};color:#00e">최저 12,720 (0,47%, 14:04)</span>
          </div>
          <div class="axis right">
            ${this.ticks(mainTicks, 0, mainTop)}
            ${percents.map((t, i) => html`<span class="lab" style="top:${mainTop(106 + i * 85)}">${t}</span>`)}
            <span class="lab note red" style="top:${mainTop(84)}">LC:0,47</span>
            <span class="lab note t-blue" style="top:${mainTop(96)}">HC:-23,93</span>
            <span class="mark" style="top:${mainTop(564)}">14,320<i>-0,28%</i></span>
            <span class="lab now" style="top:${mainTop(840)}">12,780</span>
            <span class="lab t-blue" style="top:${mainTop(853)}">-11,00</span>
          </div>
          <div class="axis left">
            ${this.ticks(subTicks, 3, subTop)}
            ${volumes.map(([y, t]) => html`<span class="lab vol" style="top:${subTop(y)}">${t}</span>`)}
          </div>
          <div class="plot">${this.subPlot()}</div>
          <div class="axis right">
            ${this.ticks(subTicks, 3, subTop)}
            ${volumes.map(([y, t]) => html`<span class="lab" style="top:${subTop(y)}">${t}</span>`)}
            <button class="shut" aria-label="지표 닫기">${icon(6, 6, svg`<path d="M1 1l4 4M5 1l-4 4" stroke="#fff" />`)}</button>
          </div>
          <div></div>
          <div class="time">
            <span class="day">08/07</span>
            ${times.map(([x, t]) => html`<span style="left:${px(x)}">${t}</span>`)}
            <span class="cross" style="left:${px(1568)}">2025/08/07(목) 14:05:35</span>
          </div>
          <div class="last">15:14:00</div>
        </div>
        <footer class="foot">
          <button aria-label="왼쪽">${icon(6, 8, svg`<path d="M5 0v8L1 4z" fill="#000" />`)}</button>
          <div class="track"><div class="thumb"></div></div>
          <button aria-label="재생">${icon(6, 10, svg`<path d="M1 1v8l4-4z" fill="#000" />`)}</button>
          <button aria-label="뒤로">${icon(10, 8, svg`<path d="M5 0v8L1 4zM9 0v8L5 4z" fill="#000" />`)}</button>
          <button aria-label="정지">${icon(7, 7, svg`<path d="M0 0h7v7H0z" fill="#000" />`)}</button>
          <button aria-label="앞으로">${icon(10, 8, svg`<path d="M1 0v8l4-4zM5 0v8l4-4z" fill="#000" />`)}</button>
          <input class="zoom" type="range" min="0" max="100" value="54" aria-label="속도" />
          ${footIcons.map(([n, g], i) => html`<button class="ico ${i === 3 ? "on" : ""}" aria-label=${n}>${icon(15, 15, g)}</button>`)}
          <button class="ico letter">A</button>
        </footer>
      </div>`;
  }
}
